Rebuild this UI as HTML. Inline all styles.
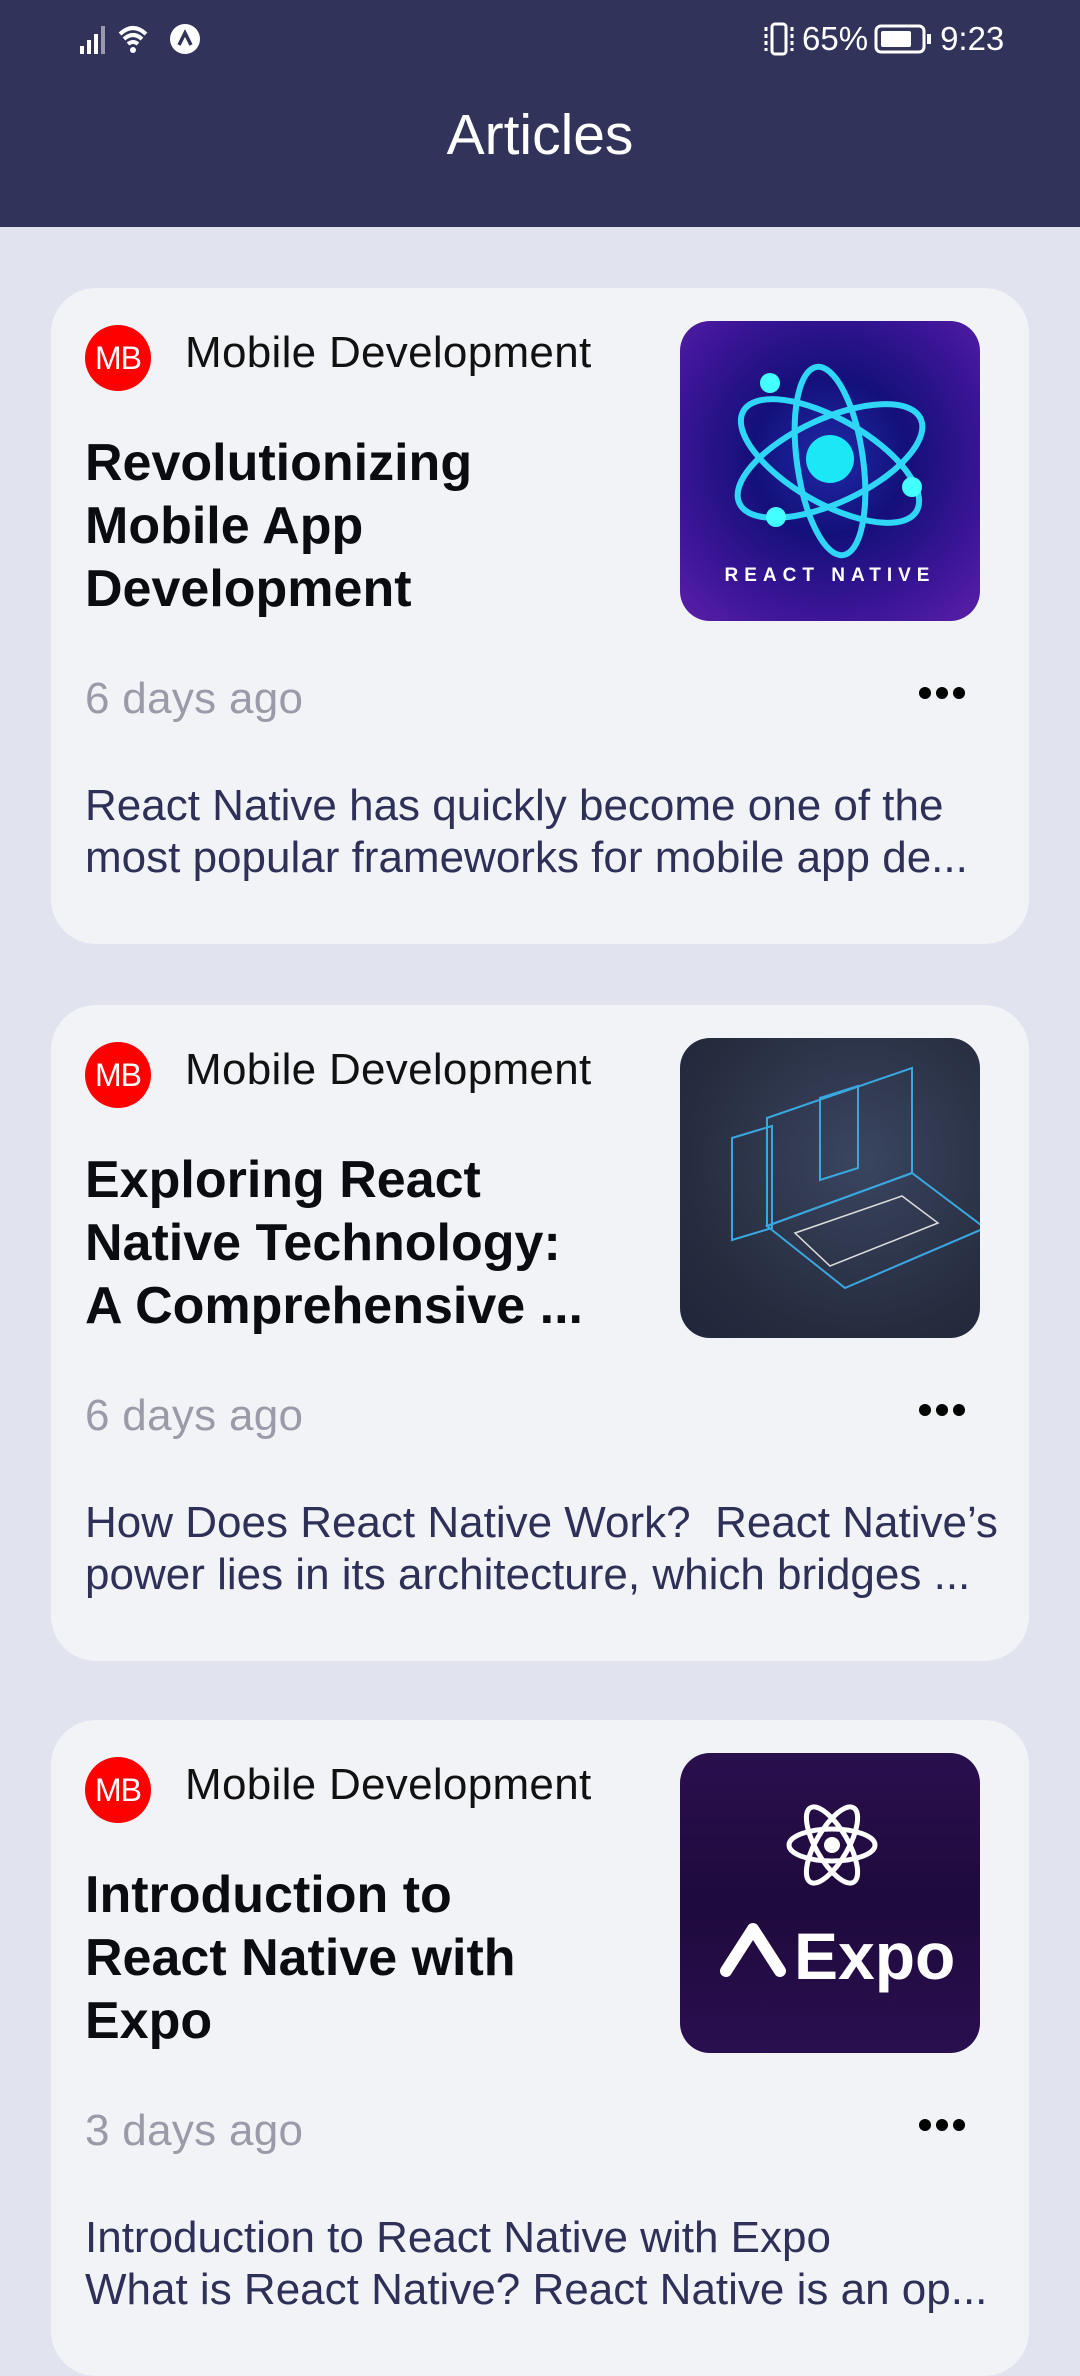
<!DOCTYPE html>
<html><head><meta charset="utf-8"><style>
*{margin:0;padding:0;box-sizing:border-box}
body{width:1080px;height:2340px;overflow:hidden;background:#e1e3ef;font-family:"Liberation Sans",sans-serif;position:relative}
.hdr{position:absolute;left:0;top:0;width:1080px;height:227px;background:#31335a}
.title{position:absolute;top:102px;width:1080px;text-align:center;color:#fff;font-size:57px}
.sb{position:absolute;top:18px;color:#fff;font-size:36px}
.card{position:absolute;left:51px;width:978px;height:656px;background:#f2f3f7;border-radius:45px}
.av{position:absolute;left:34px;top:37px;width:66px;height:66px;border-radius:50%;background:#f00;color:#fff;font-size:32px;line-height:66px;text-align:center;letter-spacing:-1px}
.cat{position:absolute;left:134px;top:40px;font-size:44px;letter-spacing:.3px;color:#111}
.t{position:absolute;left:34px;top:144px;width:600px;font-size:52px;font-weight:bold;line-height:63px;color:#0b0b12;white-space:nowrap}
.img{position:absolute;left:629px;top:33px;width:300px;height:300px;border-radius:30px;overflow:hidden}
.ago{position:absolute;left:34px;top:386px;font-size:44px;letter-spacing:.3px;color:#9a9ba8}
.dots{position:absolute;left:868px;top:398px;}
.dots i{display:inline-block;width:12px;height:12px;border-radius:50%;background:#000;margin-right:5px}
.d{position:absolute;left:34px;top:492px;width:940px;font-size:44px;line-height:52px;color:#2e3057;white-space:nowrap}
</style></head><body>
<div class="hdr">
<div class="sb" style="left:80px;top:22px">
<svg width="125" height="34" viewBox="0 0 125 34"><g fill="#fff"><rect x="0" y="24" width="4" height="8"/><rect x="7" y="18" width="4" height="14"/><rect x="14" y="12" width="4" height="20"/><rect x="21" y="4" width="4" height="28" opacity=".5"/></g><path d="M40 12 Q53 0 66 12 M44 17 Q53 9 62 17 M48 22 Q53 18 58 22" stroke="#fff" stroke-width="4" fill="none"/><circle cx="53" cy="28" r="3" fill="#fff"/><circle cx="105" cy="17" r="15" fill="#fff"/><path d="M99 23 L105 11 L111 23" stroke="#31335a" stroke-width="3.5" fill="none"/></svg></div>
<div class="sb" style="left:762px;top:20px;font-size:33px;display:flex;align-items:center;gap:6px">
<svg width="34" height="36" viewBox="0 0 34 36"><rect x="10" y="3" width="14" height="30" rx="3" stroke="#fff" stroke-width="3" fill="none"/><path d="M4 6v24M30 6v24" stroke="#fff" stroke-width="3" stroke-dasharray="4 3"/></svg>
<span>65%</span>
<svg width="60" height="34" viewBox="0 0 60 34"><rect x="2" y="4" width="48" height="26" rx="5" stroke="#fff" stroke-width="3" fill="none"/><rect x="7" y="9" width="30" height="16" rx="2" fill="#fff"/><rect x="53" y="12" width="4" height="10" fill="#fff"/></svg>
<span>9:23</span></div>
<div class="title">Articles</div>
</div>

<div class="card" style="top:288px">
<div class="av">MB</div><div class="cat">Mobile Development</div>
<div class="t">Revolutionizing<br>Mobile App<br>Development</div>
<div class="img" style="background:radial-gradient(circle at 50% 45%,#1e2aa8 0%,#14107a 35%,#3a1596 70%,#5a1fa8 100%)">
<svg width="300" height="300" viewBox="0 0 300 300"><g stroke="#2fd6f5" stroke-width="6" fill="none"><ellipse cx="150" cy="140" rx="100" ry="42" transform="rotate(30 150 140)"/><ellipse cx="150" cy="140" rx="100" ry="42" transform="rotate(-25 150 140)"/><ellipse cx="150" cy="140" rx="33" ry="95" transform="rotate(-8 150 140)"/></g><circle cx="150" cy="138" r="24" fill="#1ae8f7"/><circle cx="90" cy="62" r="10" fill="#4ff"/><circle cx="232" cy="166" r="10" fill="#4ff"/><circle cx="96" cy="196" r="10" fill="#4ff"/><text x="150" y="260" fill="#fff" font-family="Liberation Sans" font-weight="bold" font-size="19" text-anchor="middle" letter-spacing="6">REACT NATIVE</text></svg></div>
<div class="ago">6 days ago</div><div class="dots"><i></i><i></i><i></i></div>
<div class="d">React Native has quickly become one of the<br>most popular frameworks for mobile app de...</div>
</div>

<div class="card" style="top:1005px">
<div class="av">MB</div><div class="cat">Mobile Development</div>
<div class="t">Exploring React<br>Native Technology:<br>A Comprehensive ...</div>
<div class="img" style="background:radial-gradient(circle at 60% 40%,#3a4560,#262c3e 70%,#20263a)">
<svg width="300" height="300" viewBox="0 0 300 300"><g stroke="#3aa8e0" stroke-width="2" fill="none"><path d="M87 80 L232 30 L232 135 L87 188 Z"/><path d="M87 188 L232 135 L305 190 L165 250 Z"/><path d="M52 100 L92 88 L92 190 L52 202 Z"/><path d="M140 60 L178 48 L178 130 L140 142 Z"/></g><path d="M115 195 L222 158 L258 185 L150 228 Z" stroke="#ddd" stroke-width="1.5" fill="none"/></svg></div>
<div class="ago">6 days ago</div><div class="dots"><i></i><i></i><i></i></div>
<div class="d">How Does React Native Work?&nbsp; React Native’s<br>power lies in its architecture, which bridges ...</div>
</div>

<div class="card" style="top:1720px">
<div class="av">MB</div><div class="cat">Mobile Development</div>
<div class="t">Introduction to<br>React Native with<br>Expo</div>
<div class="img" style="background:linear-gradient(#2a0f4e,#1e0a3c 50%,#2a0f50)">
<svg width="300" height="300" viewBox="0 0 300 300"><g stroke="#fff" stroke-width="5" fill="none"><ellipse cx="152" cy="92" rx="43" ry="16"/><ellipse cx="152" cy="92" rx="43" ry="16" transform="rotate(60 152 92)"/><ellipse cx="152" cy="92" rx="43" ry="16" transform="rotate(-60 152 92)"/></g><circle cx="152" cy="92" r="8" fill="#fff"/><path d="M46 218 L73 176 L100 218" stroke="#fff" stroke-width="12" stroke-linecap="round" stroke-linejoin="round" fill="none"/><text x="114" y="226" fill="#fff" font-family="Liberation Sans" font-weight="bold" font-size="66">Expo</text></svg></div>
<div class="ago">3 days ago</div><div class="dots"><i></i><i></i><i></i></div>
<div class="d">Introduction to React Native with Expo<br>What is React Native? React Native is an op...</div>
</div>
</body></html>
